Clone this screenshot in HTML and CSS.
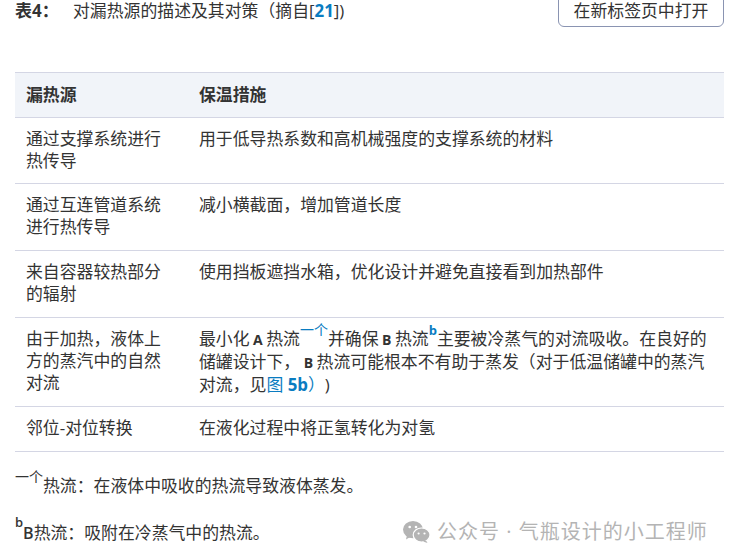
FILE: index.html
```html
<!DOCTYPE html>
<html lang="zh-CN">
<head>
<meta charset="utf-8">
<title>表4</title>
<link rel="stylesheet" href="styles.css">
</head>
<body>
<div class="page">
  <div class="caption-row">
    <div class="caption"><b class="label">表4：</b><span>对漏热源的描述及其对策（摘自[<b class="link">21</b>])</span></div>
    <button class="open-btn">在新标签页中打开</button>
  </div>
  <table class="data">
    <thead>
      <tr><th class="c1">漏热源</th><th>保温措施</th></tr>
    </thead>
    <tbody>
      <tr class="h66"><td>通过支撑系统进行热传导</td><td>用于低导热系数和高机械强度的支撑系统的材料</td></tr>
      <tr class="h67"><td>通过互连管道系统进行热传导</td><td>减小横截面，增加管道长度</td></tr>
      <tr class="h67"><td>来自容器较热部分的辐射</td><td>使用挡板遮挡水箱，优化设计并避免直接看到加热部件</td></tr>
      <tr class="h89"><td>由于加热，液体上方的蒸汽中的自然对流</td><td>最小化<b class="latin">A</b>热流<sup class="link note">一个</sup>并确保<b class="latin">B</b>热流<sup class="link b">b</sup>主要被冷蒸气的对流吸收。在良好的储罐设计下，<b class="latin">B</b>热流可能根本不有助于蒸发（对于低温储罐中的蒸汽对流，见<span class="link">图 <b>5b</b>）</span>)</td></tr>
      <tr class="h45"><td>邻位-对位转换</td><td>在液化过程中将正氢转化为对氢</td></tr>
    </tbody>
  </table>
  <p class="foot first"><sup class="note">一个</sup>热流：在液体中吸收的热流导致液体蒸发。</p>
  <p class="foot second"><sup class="b lift">b</sup><b class="latin tight">B</b>热流：吸附在冷蒸气中的热流。</p>
  <div class="watermark">
    <svg class="wx" viewBox="0 0 27 22" width="27" height="22" aria-hidden="true">
      <ellipse cx="10" cy="8.6" rx="10" ry="8.6" fill="#b4b4b4"/>
      <path d="M4 14l-1 4.5 5-3z" fill="#b4b4b4"/>
      <ellipse cx="18.6" cy="14" rx="8.4" ry="7" fill="#b4b4b4" stroke="#fff" stroke-width="1.2"/>
      <path d="M23 19.5l1.5 2.5-4.500-1.500z" fill="#b4b4b4"/>
      <circle cx="6.700" cy="6" r="1.300" fill="#fff"/>
      <circle cx="13" cy="6" r="1.300" fill="#fff"/>
      <circle cx="15.600" cy="12.500" r="1.100" fill="#fff"/>
      <circle cx="21.500" cy="12.500" r="1.100" fill="#fff"/>
    </svg>
    <span>公众号 · 气瓶设计的小工程师</span>
  </div>
</div>
</body>
</html>
```
FILE: styles.css
```css
html, body { margin: 0; padding: 0; }
body {
  background: #fff;
  color: #333;
  font-family: "Open Sans", "Noto Sans CJK SC", sans-serif;
  font-size: 16.88px;
  line-height: 22px;
  text-spacing-trim: space-all;
  overflow: hidden;
}
.page { position: relative; width: 729px; height: 560px; overflow: hidden; padding: 0 5px 0 15px; box-sizing: border-box; }
.caption-row { display: flex; justify-content: space-between; align-items: flex-end; height: 27px; }
.caption { align-self: flex-start; display: flex; line-height: 22px; }
.label { width: 58px; font-size: 17px; color: #333; }
.link { color: #0a7cc1; }
.open-btn {
  width: 166px; height: 40px;
  border: 1px solid #8a94b2; border-radius: 0 0 6px 6px;
  background: #fff; color: #333;
  font: 16.88px/22px "Open Sans", "Noto Sans CJK SC", sans-serif;
  padding: 7px 0 0; box-sizing: border-box; flex: none; align-self: flex-end;
}
.data { width: 709px; margin-top: 45px; border-collapse: collapse; table-layout: fixed; }
.data th, .data td { padding: 11px; text-align: left; vertical-align: top; border-bottom: 1px solid #d4d6e4; }
.data td { padding-top: 10px; padding-bottom: 10px; }
.data th { background: #f1f4f9; font-weight: 700; border-top: 1px solid #d4d6e4; color: #333; }
.c1 { width: 151px; }
.h66 { height: 66px; }
.h67 { height: 67px; }
.h89 { height: 89px; }
.h45 { height: 45px; }
.latin { font-weight: 700; font-size: 14px; margin: 0 3.5px; }
.latin.tight { margin: 0; font-size: 16px; font-weight: 600; }
sup { font-size: 14px; line-height: 0; vertical-align: 10px; }
sup.b { font-weight: 700; font-size: 13px; }
sup.lift { vertical-align: 12px; font-weight: 600; }
.foot { margin: 0; }
.foot.first { margin-top: 23px; }
.foot.second { margin-top: 25px; }
.watermark {
  position: absolute; left: 403px; top: 520px;
  display: flex; align-items: center; gap: 7px;
  color: #b4b4b4; font-size: 20px; line-height: 24px; letter-spacing: 1px; white-space: nowrap;
}
.wx { flex: none; }
```
